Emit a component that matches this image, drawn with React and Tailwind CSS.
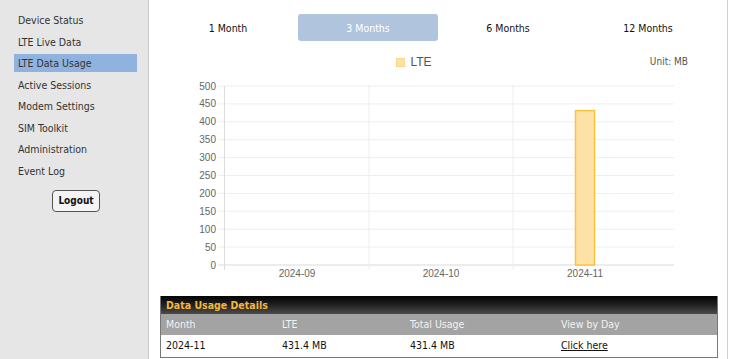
import React from "react";

const menu = [
  "Device Status",
  "LTE Live Data",
  "LTE Data Usage",
  "Active Sessions",
  "Modem Settings",
  "SIM Toolkit",
  "Administration",
  "Event Log",
];

const tabs = ["1 Month", "3 Months", "6 Months", "12 Months"];

const Chart = () => {
  const ticks = [0, 50, 100, 150, 200, 250, 300, 350, 400, 450, 500];
  const yOf = (v) => 265 - (v / 500) * 179;
  return (
    <svg width="559" height="202" viewBox="159 78 559 202" className="block">
      {ticks.map((t) => (
        <g key={t}>
          <line
            x1="218"
            x2="674"
            y1={yOf(t)}
            y2={yOf(t)}
            stroke={t === 0 ? "#d9d9d9" : "#eeeeee"}
            strokeWidth="1"
          />
          <text
            x="216"
            y={yOf(t) + 3.5}
            textAnchor="end"
            fontSize="10"
            fill="#666"
            fontFamily="'Liberation Sans', Arial, sans-serif"
          >
            {t}
          </text>
        </g>
      ))}
      {[224.5, 369, 513].map((x, i) => (
        <line
          key={x}
          x1={x}
          x2={x}
          y1="86"
          y2="270"
          stroke={i === 0 ? "#dcdcdc" : "#eeeeee"}
          strokeWidth="1"
        />
      ))}
      <rect
        x="575.5"
        y={yOf(431.4)}
        width="19"
        height={265 - yOf(431.4)}
        fill="#fee2a5"
        stroke="#fcc13f"
        strokeWidth="1.5"
      />
      {[
        ["2024-09", 297],
        ["2024-10", 441],
        ["2024-11", 585],
      ].map(([l, x]) => (
        <text
          key={l}
          x={x}
          y="277"
          textAnchor="middle"
          fontSize="10"
          fill="#666"
          fontFamily="'Liberation Sans', Arial, sans-serif"
        >
          {l}
        </text>
      ))}
    </svg>
  );
};

export default function App() {
  return (
    <div
      className="w-[731px] h-[359px] flex bg-white text-[10.5px] text-[#333] overflow-hidden"
      style={{ fontFamily: "'DejaVu Sans Condensed', 'DejaVu Sans', Verdana, sans-serif" }}
    >
      {/* Sidebar */}
      <div className="w-[149px] shrink-0 bg-[#e6e6e6] border-r border-[#c8c8c8] pt-[11px] pl-[14px]">
        <div className="flex flex-col gap-[3.5px]">
          {menu.map((m) => (
            <div
              key={m}
              className={`w-[123px] h-[18px] leading-[18px] pl-[4px] ${
                m === "LTE Data Usage" ? "bg-[#8fb2df]" : ""
              }`}
            >
              {m}
            </div>
          ))}
        </div>
        <div className="mt-[10px] flex justify-center pr-[10px]">
          <button className="w-[48px] h-[22px] rounded-[4px] border border-[#555] bg-[#f4f4f4] text-[10px] font-bold text-[#111]">
            Logout
          </button>
        </div>
      </div>

      {/* Main */}
      <div className="w-[579px] shrink-0 border-r border-[#d0d0d0] pt-[14px] pl-[9px]">
        <div className="flex w-[560px]">
          {tabs.map((t) => (
            <div
              key={t}
              className={`w-[140px] h-[27px] pt-[2px] flex items-center justify-center rounded-[3px] ${
                t === "3 Months" ? "bg-[#b0c4de] text-white" : "text-[#111]"
              }`}
            >
              {t}
            </div>
          ))}
        </div>

        <div className="relative mt-[11px] h-[20px] w-[560px] flex items-center justify-center">
          <div className="flex items-center gap-[5px] mr-[48px]">
            <span className="w-[9px] h-[9px] bg-[#fee2a5] border border-[#fcd68a]" />
            <span
              className="text-[12px] text-[#555]"
              style={{ fontFamily: "'Liberation Sans', Arial, sans-serif" }}
            >
              LTE
            </span>
          </div>
          <span className="absolute right-[30px] top-[2px] text-[10px] text-[#555]">
            Unit: MB
          </span>
        </div>

        <div className="mt-[6px] -ml-[9px] pl-[10px]">
          <Chart />
        </div>

        <div className="mt-[16px] ml-[2px] w-[558px] border border-[#777] border-t-0">
          <div className="h-[18px] leading-[19px] pl-[5px] bg-gradient-to-b from-[#050505] via-[#222] to-[#4c4c4c] text-[#f5b73a] font-bold">
            Data Usage Details
          </div>
          <div className="grid grid-cols-[116px_128px_151px_1fr] h-[21px] pt-[1px] items-center bg-[#a3a3a3] text-[#f2f2f2]">
            <span className="pl-[5px]">Month</span>
            <span className="pl-[5px]">LTE</span>
            <span className="pl-[5px]">Total Usage</span>
            <span className="pl-[5px]">View by Day</span>
          </div>
          <div className="grid grid-cols-[116px_128px_151px_1fr] h-[22px] items-center bg-white text-[#111]">
            <span className="pl-[5px]">2024-11</span>
            <span className="pl-[5px]">431.4 MB</span>
            <span className="pl-[5px]">431.4 MB</span>
            <span className="pl-[5px] underline">Click here</span>
          </div>
        </div>
      </div>
    </div>
  );
}
